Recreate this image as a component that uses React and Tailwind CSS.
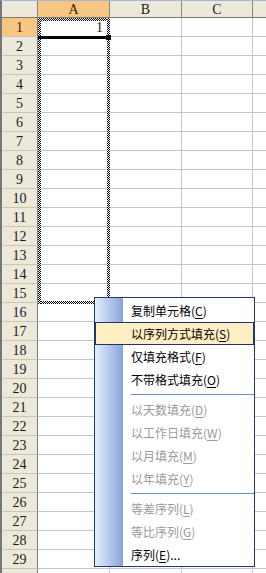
import React from "react";

const rows = Array.from({ length: 30 }, (_, i) => i + 1);

function Item({ label, k, rest = "", disabled, active }) {
  return (
    <div
      className={
        "h-[23px] flex items-center text-[12px] leading-none whitespace-nowrap " +
        (active
          ? "border border-[#1f3270] bg-[#ffeec2] pl-[35px] "
          : "pl-[36px] ") +
        (disabled ? "text-[#9a9a9a]" : "text-black")
      }
    >
      <span>
        {label}(<span className="underline underline-offset-2">{k}</span>){rest}
      </span>
    </div>
  );
}

function Sep() {
  return (
    <div className="h-[7px] flex items-center pl-[36px]">
      <div className="h-px w-full bg-[#6a8ccb]" />
    </div>
  );
}

const ants =
  "absolute bg-[image:repeating-conic-gradient(#000_0%_25%,#fff_0%_50%)] bg-[length:2px_2px]";

export default function App() {
  return (
    <div className="relative w-[266px] h-[573px] overflow-hidden bg-white font-['Liberation_Serif',serif] text-[14px] text-[#1a1a1a]">
      <div className="border-t border-[#a6b7d3] border-l-2 border-l-[#767676] h-full">
        {/* header row */}
        <div className="flex h-[17px] bg-[#ede9da] border-b border-[#7d7a6c]">
          <div className="w-[36px] border-r border-[#8a877a]" />
          <div className="w-[72px] bg-[#f8c683] border-r border-[#8a877a] flex items-center justify-center text-[#3b1a05]">A</div>
          <div className="w-[72px] border-r border-[#8a877a] flex items-center justify-center">B</div>
          <div className="w-[71px] border-r border-[#8a877a] flex items-center justify-center">C</div>
          <div className="flex-1" />
        </div>
        {rows.map((r) => (
          <div key={r} className="flex h-[19px]">
            <div
              className={
                "w-[36px] border-r border-r-[#7d7a6c] border-b border-b-[#c9c6b6] flex items-center justify-center " +
                (r === 1 ? "bg-[#f8c683] text-[#3b1a05]" : "bg-[#ede9da]")
              }
            >
              {r < 30 ? r : ""}
            </div>
            <div className="w-[72px] border-r border-b border-[#c4c4c4] flex items-center justify-end pr-[6px]">
              {r === 1 ? "1" : ""}
            </div>
            <div className="w-[72px] border-r border-b border-[#c4c4c4]" />
            <div className="w-[71px] border-r border-b border-[#c4c4c4]" />
            <div className="flex-1 border-b border-[#c4c4c4]" />
          </div>
        ))}
      </div>

      {/* copy marquee A1:A15 */}
      <div className="absolute left-[38px] top-[18px] w-[72px] h-[286px] pointer-events-none">
        <div className={ants + " left-0 top-0 w-full h-[3px]"} />
        <div className={ants + " left-0 bottom-0 w-full h-[3px]"} />
        <div className={ants + " left-0 top-0 w-[3px] h-full"} />
        <div className={ants + " right-0 top-0 w-[3px] h-full"} />
      </div>
      {/* active cell bottom edge + fill handle */}
      <div className="absolute left-[38px] top-[36px] w-[68px] h-[3px] bg-black" />
      <div className="absolute left-[106px] top-[35px] w-[5px] h-[5px] bg-black" />

      {/* context menu */}
      <div className="absolute left-[94px] top-[297px] w-[161px] h-[270px] border border-[#1f3a6e] bg-[linear-gradient(to_right,#e4eefc_0px,#86a5dc_28px,#ffffff_28px)] pt-px font-['Noto_Sans_CJK_SC','Noto_Sans',sans-serif]">
        <Item label="复制单元格" k="C" />
        <Item label="以序列方式填充" k="S" active />
        <Item label="仅填充格式" k="F" />
        <Item label="不带格式填充" k="O" />
        <Sep />
        <Item label="以天数填充" k="D" disabled />
        <Item label="以工作日填充" k="W" disabled />
        <Item label="以月填充" k="M" disabled />
        <Item label="以年填充" k="Y" disabled />
        <Sep />
        <Item label="等差序列" k="L" disabled />
        <Item label="等比序列" k="G" disabled />
        <Item label="序列" k="E" rest="..." />
      </div>
    </div>
  );
}
